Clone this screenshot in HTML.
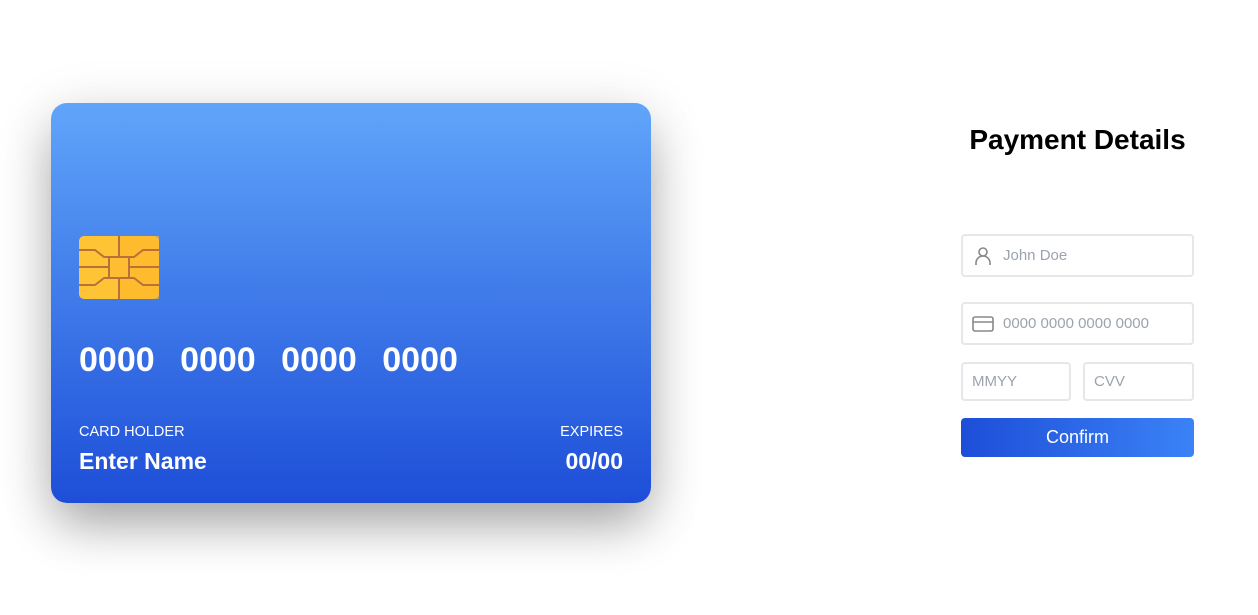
<!DOCTYPE html>
<html><head><style>
*{box-sizing:border-box;margin:0;padding:0}
body{width:1258px;height:615px;background:#fff;font-family:"Liberation Sans",sans-serif;position:relative;overflow:hidden}
.card{position:absolute;left:51px;top:103px;width:600px;height:400px;border-radius:16px;background:linear-gradient(#60a5fa,#1d4ed8);box-shadow:0 25px 50px -5px rgba(0,0,0,.3),0 10px 60px 0 rgba(0,0,0,.12);color:#fff}
.num{position:absolute;left:28px;top:238px;font-size:34px;font-weight:bold;word-spacing:16px;letter-spacing:0}
.lbl{position:absolute;top:321px;font-size:14.5px}
.val{position:absolute;top:345px;font-size:23px;font-weight:bold}
h1{position:absolute;left:951px;width:253px;top:124px;text-align:center;font-size:28px;font-weight:bold;color:#000}
.in{position:absolute;border:2px solid #e5e7eb;border-radius:4px;color:#9ca3af;font-size:15px;display:flex;align-items:center;padding-left:9px}
.btn{position:absolute;left:961px;top:418px;width:233px;height:39px;border-radius:4px;background:linear-gradient(90deg,#1d4ed8,#3b82f6);color:#fff;font-size:18px;text-align:center;line-height:39px}
</style></head><body>
<div class="card">
<svg style="position:absolute;left:28px;top:133px" width="80" height="63" viewBox="0 0 80 63">
<rect width="80" height="63" rx="5" fill="#ffc436"/>
<rect x="40" width="40" height="63" fill="#ffb52a" opacity=".6"/>
<path d="M40 0V63" stroke="#b8713a" stroke-width="2"/>
<rect x="30" y="21" width="20" height="21" fill="#ffbd33" stroke="#b8713a" stroke-width="2"/>
<path d="M0 14H16L25 21H30M0 31H30M0 49H16L25 42H30M80 14H64L55 21H50M80 31H50M80 49H64L55 42H50" fill="none" stroke="#b8713a" stroke-width="2"/>
</svg>
<div class="num">0000 0000 0000 0000</div>
<div class="lbl" style="left:28px">CARD HOLDER</div>
<div class="lbl" style="right:28px">EXPIRES</div>
<div class="val" style="left:28px">Enter Name</div>
<div class="val" style="right:28px">00/00</div>
</div>
<h1>Payment Details</h1>
<div class="in" style="left:961px;top:234px;width:233px;height:43px">
<svg width="22" height="22" viewBox="0 0 22 22" style="margin-right:9px"><circle cx="11" cy="7" r="4" fill="none" stroke="#888" stroke-width="1.6"/><path d="M4 20v-2a6 6 0 0 1 14 0v2" fill="none" stroke="#888" stroke-width="1.6"/></svg>John Doe</div>
<div class="in" style="left:961px;top:302px;width:233px;height:43px">
<svg width="22" height="22" viewBox="0 0 22 22" style="margin-right:9px"><rect x="1" y="4" width="20" height="14" rx="2" fill="none" stroke="#888" stroke-width="1.6"/><path d="M1 9H21" stroke="#888" stroke-width="1.6"/></svg>0000 0000 0000 0000</div>
<div class="in" style="left:961px;top:362px;width:110px;height:39px">MMYY</div>
<div class="in" style="left:1083px;top:362px;width:111px;height:39px">CVV</div>
<div class="btn">Confirm</div>
</body></html>
